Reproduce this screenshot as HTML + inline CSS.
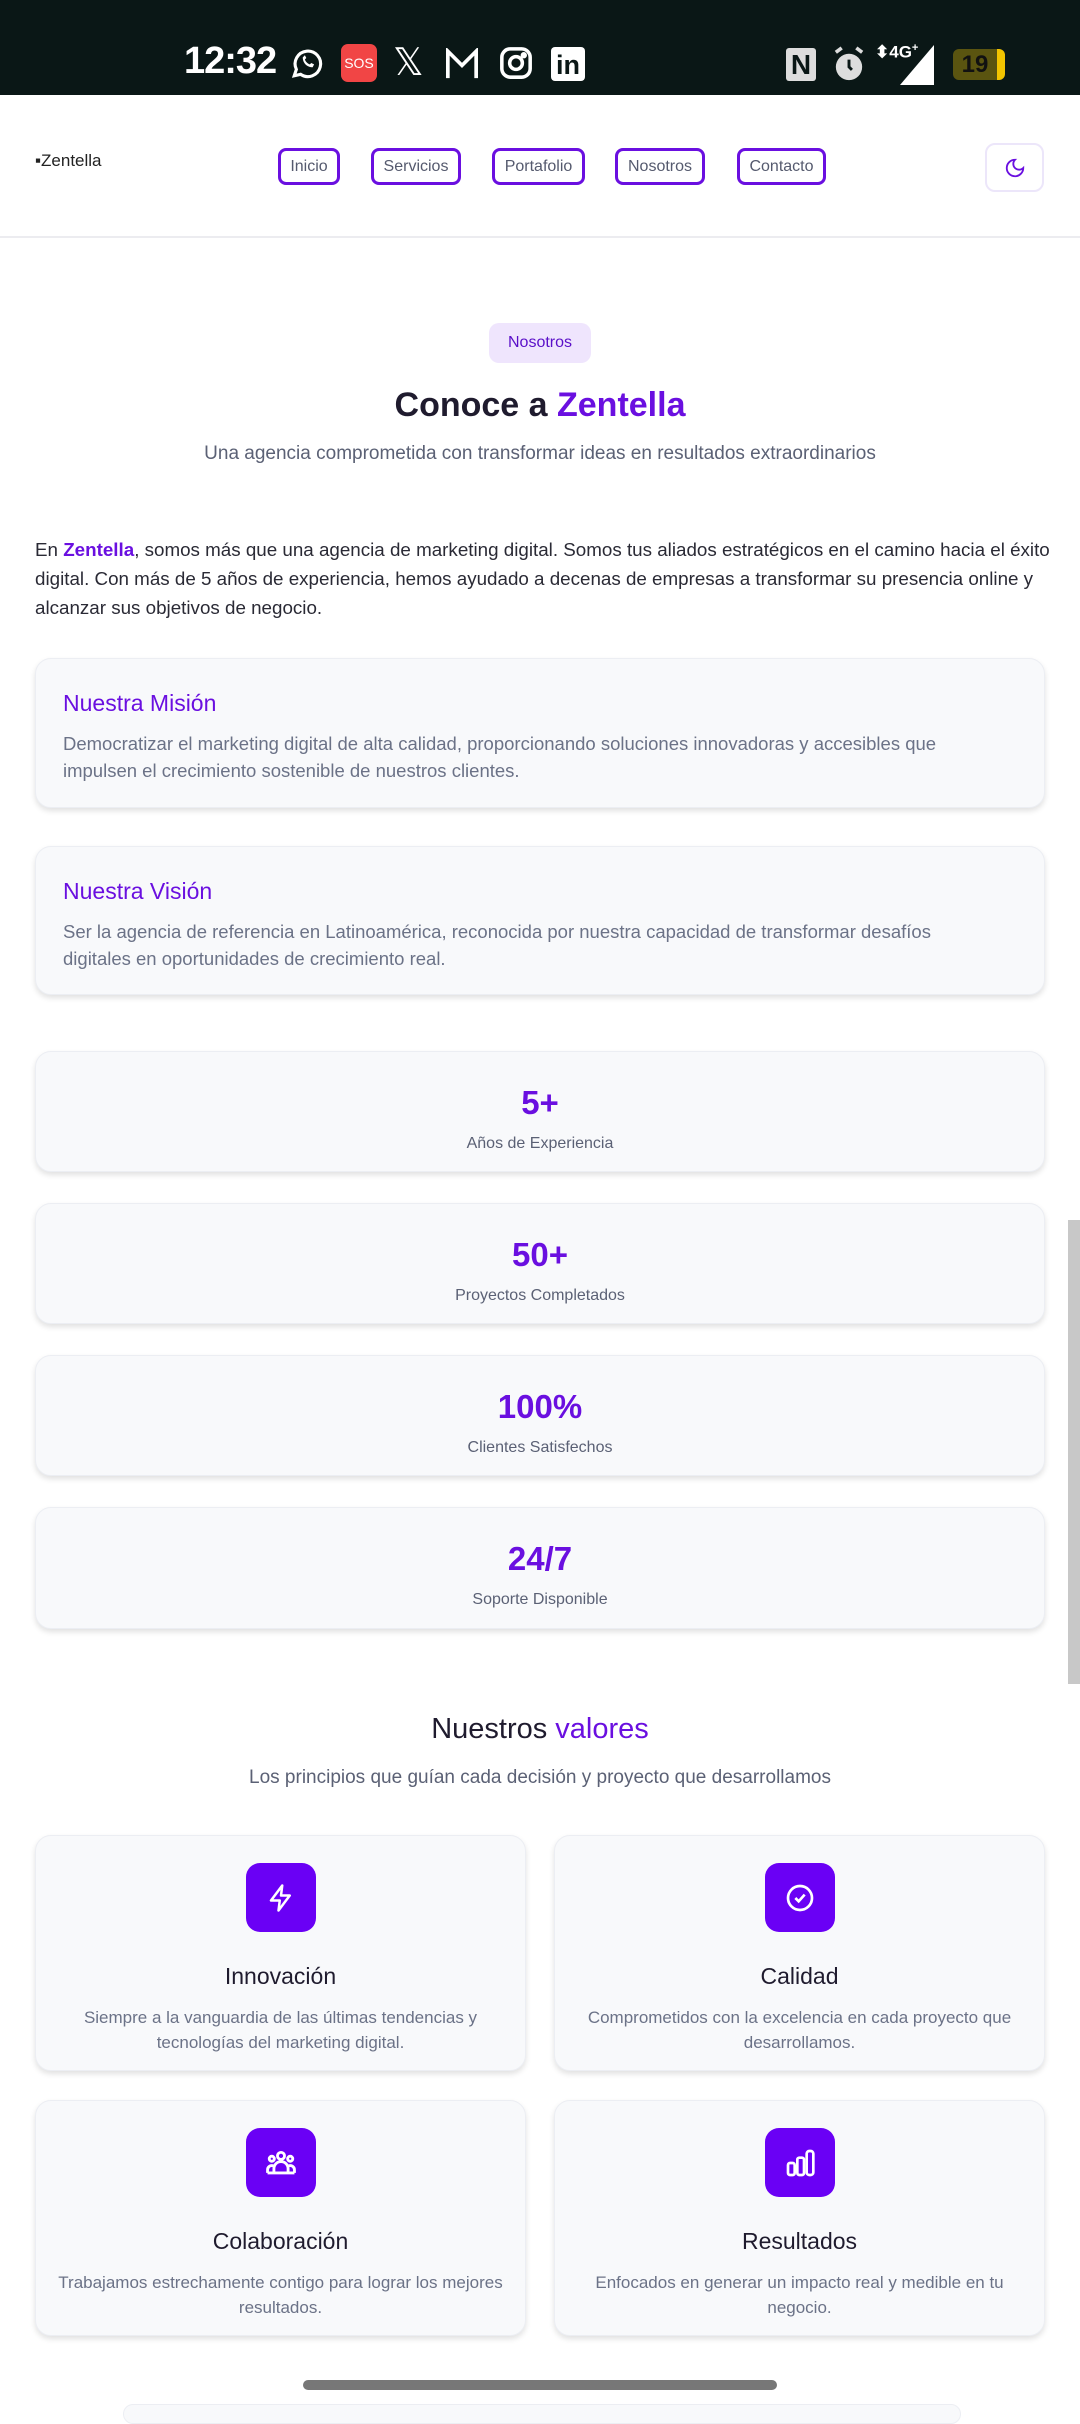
<!DOCTYPE html>
<html><head><meta charset="utf-8"><style>
*{margin:0;padding:0;box-sizing:border-box}
body{width:1080px;height:2412px;overflow:hidden;background:#fff;font-family:"Liberation Sans",sans-serif;position:relative;color:#1f1b2e}
.abs{position:absolute}
.sb{left:0;top:0;width:1080px;height:95px;background:#0a1716;color:#fff}
.nav{top:148px;height:37px;border:3px solid #6a0fe0;border-radius:8px;font-size:16px;color:#555a6e;display:flex;align-items:center;justify-content:center}
.card{left:35px;width:1010px;background:#f8f9fb;border:1px solid #eceef3;border-radius:16px;box-shadow:0 3px 6px rgba(0,0,0,.12)}
.ct{position:absolute;left:27px;font-size:23px;color:#6a0fe0}
.cp{position:absolute;left:27px;font-size:18.5px;color:#6b7287;line-height:27px;white-space:nowrap}
.stat{text-align:center}
.stat b{display:block;font-size:33px;color:#6a0fe0;margin-top:31px;line-height:40px}
.stat span{display:block;font-size:16px;color:#5b6175;margin-top:12px}
.vc{width:491px;height:236px;background:#f8f9fb;border:1px solid #eceef3;border-radius:16px;box-shadow:0 3px 6px rgba(0,0,0,.12);text-align:center}
.ic{position:absolute;left:210px;top:27px;width:70px;height:69px;background:#6a00f5;border-radius:14px;display:flex;align-items:center;justify-content:center}
.vt{position:absolute;left:0;right:0;top:127px;font-size:23px;color:#1f1b2e}
.vd{position:absolute;left:0;right:0;top:169px;font-size:17px;color:#6b7287;line-height:25px}
</style></head><body>
<div class="abs sb">
 <div class="abs" style="left:184px;top:40px;font-size:38px;font-weight:bold;letter-spacing:-1px">12:32</div>
 <svg class="abs" style="left:290px;top:46px" width="34" height="34" viewBox="0 0 24 24" fill="none" stroke="#fff" stroke-width="2.2"><path d="M3 21l1.5-4.5A9 9 0 1 1 7.5 20z"/><path d="M9 8c0 4 3 7 7 7l1-2-2-1-1 1c-1.5-.5-3-2-3.5-3.5l1-1-1-2z" fill="#fff" stroke="none"/></svg>
 <div class="abs" style="left:341px;top:44px;width:36px;height:38px;background:#f14545;border-radius:7px;font-size:14px;display:flex;align-items:center;justify-content:center">SOS</div>
 <div class="abs" style="left:393px;top:40px;font-size:38px">𝕏</div>
 <svg class="abs" style="left:445px;top:48px" width="34" height="32" viewBox="0 0 24 22" fill="none" stroke="#fff" stroke-width="2.6"><path d="M2 21V2l10 10L22 2v19"/></svg>
 <svg class="abs" style="left:499px;top:46px" width="34" height="34" viewBox="0 0 24 24" fill="none" stroke="#fff" stroke-width="2.5"><rect x="2" y="2" width="20" height="20" rx="6"/><circle cx="12" cy="12" r="4.5"/><circle cx="17.5" cy="6.5" r="1" fill="#fff"/></svg>
 <div class="abs" style="left:551px;top:47px;width:34px;height:34px;background:#fff;border-radius:4px;color:#0a1716;font-weight:bold;font-size:27px;line-height:36px;text-align:center">in</div>
 <div class="abs" style="left:786px;top:48px;width:30px;height:33px;background:#ddd;border-radius:3px;color:#0a1716;font-weight:bold;font-size:28px;line-height:33px;text-align:center">N</div>
 <svg class="abs" style="left:831px;top:45px" width="36" height="38" viewBox="0 0 24 26"><circle cx="12" cy="15" r="9" fill="#ddd"/><path d="M12 10v5l2 2" stroke="#0a1716" stroke-width="2" fill="none"/><path d="M3 5l4-3M21 5l-4-3" stroke="#ddd" stroke-width="2.5"/></svg>
 <div class="abs" style="left:875px;top:42px;font-size:17px;font-weight:bold">⬍4G<sup style="font-size:11px">+</sup></div>
 <svg class="abs" style="left:900px;top:45px" width="36" height="40"><path d="M34 0V40H0z" fill="#fff"/></svg>
 <div class="abs" style="left:953px;top:49px;width:52px;height:31px;background:#5a5410;border-radius:6px;border-right:8px solid #f2c400;color:#111;font-size:24px;line-height:31px;text-align:center;font-weight:bold">19</div>
</div>
<div class="abs" style="left:35px;top:151px;font-size:17px;color:#222">▪Zentella</div>
<div class="abs nav" style="left:278px;width:62px">Inicio</div>
<div class="abs nav" style="left:371px;width:90px">Servicios</div>
<div class="abs nav" style="left:492px;width:93px">Portafolio</div>
<div class="abs nav" style="left:615px;width:90px">Nosotros</div>
<div class="abs nav" style="left:737px;width:89px">Contacto</div>
<div class="abs" style="left:985px;top:143px;width:59px;height:49px;border:2px solid #ece6fa;border-radius:10px;display:flex;align-items:center;justify-content:center"><svg width="22" height="22" viewBox="0 0 24 24" fill="none" stroke="#6a0fe0" stroke-width="2"><path d="M12 3a6 6 0 0 0 9 9 9 9 0 1 1-9-9z"/></svg></div>
<div class="abs" style="left:0;top:236px;width:1080px;height:2px;background:#ececf0"></div>

<div class="abs" style="left:489px;top:323px;width:102px;height:40px;background:#efe5fd;border-radius:10px;color:#5a0fc8;font-size:16px;display:flex;align-items:center;justify-content:center">Nosotros</div>
<div class="abs" style="left:0;width:1080px;top:386px;text-align:center;font-size:34px;font-weight:bold;color:#1f1b2e">Conoce a <span style="color:#6a0fe0">Zentella</span></div>
<div class="abs" style="left:0;width:1080px;top:443px;text-align:center;font-size:19px;color:#5b6175">Una agencia comprometida con transformar ideas en resultados extraordinarios</div>

<div class="abs" style="left:35px;top:535px;font-size:18.8px;line-height:29px;color:#2a2a35;white-space:nowrap">En <b style="color:#6a0fe0">Zentella</b>, somos más que una agencia de marketing digital. Somos tus aliados estratégicos en el camino hacia el éxito<br>digital. Con más de 5 años de experiencia, hemos ayudado a decenas de empresas a transformar su presencia online y<br>alcanzar sus objetivos de negocio.</div>

<div class="abs card" style="top:658px;height:150px"><div class="ct" style="top:31px">Nuestra Misión</div><div class="cp" style="top:71px">Democratizar el marketing digital de alta calidad, proporcionando soluciones innovadoras y accesibles que<br>impulsen el crecimiento sostenible de nuestros clientes.</div></div>
<div class="abs card" style="top:846px;height:149px"><div class="ct" style="top:31px">Nuestra Visión</div><div class="cp" style="top:71px">Ser la agencia de referencia en Latinoamérica, reconocida por nuestra capacidad de transformar desafíos<br>digitales en oportunidades de crecimiento real.</div></div>

<div class="abs card stat" style="top:1051px;height:121px"><b>5+</b><span>Años de Experiencia</span></div>
<div class="abs card stat" style="top:1203px;height:121px"><b>50+</b><span>Proyectos Completados</span></div>
<div class="abs card stat" style="top:1355px;height:121px"><b>100%</b><span>Clientes Satisfechos</span></div>
<div class="abs card stat" style="top:1507px;height:122px"><b>24/7</b><span>Soporte Disponible</span></div>

<div class="abs" style="left:0;width:1080px;top:1713px;text-align:center;font-size:29px;color:#1f1b2e">Nuestros <span style="color:#6a0fe0">valores</span></div>
<div class="abs" style="left:0;width:1080px;top:1767px;text-align:center;font-size:19px;color:#5b6175">Los principios que guían cada decisión y proyecto que desarrollamos</div>

<div class="abs vc" style="left:35px;top:1835px"><div class="ic"><svg width="30" height="30" viewBox="0 0 24 24" fill="none" stroke="#fff" stroke-width="2" stroke-linejoin="round"><path d="M13 2L4 14h7l-1 8 9-12h-7z"/></svg></div><div class="vt">Innovación</div><div class="vd">Siempre a la vanguardia de las últimas tendencias y<br>tecnologías del marketing digital.</div></div>
<div class="abs vc" style="left:554px;top:1835px"><div class="ic"><svg width="32" height="32" viewBox="0 0 24 24" fill="none" stroke="#fff" stroke-width="2"><circle cx="12" cy="12" r="9"/><path d="M8.5 12l2.5 2.5 4.5-5"/></svg></div><div class="vt">Calidad</div><div class="vd">Comprometidos con la excelencia en cada proyecto que<br>desarrollamos.</div></div>
<div class="abs vc" style="left:35px;top:2100px"><div class="ic"><svg width="34" height="34" viewBox="0 0 24 24" fill="none" stroke="#fff" stroke-width="2"><circle cx="12" cy="7" r="2.5"/><circle cx="5.5" cy="9" r="1.8"/><circle cx="18.5" cy="9" r="1.8"/><path d="M7 19v-3a5 5 0 0 1 10 0v3zM2.5 19v-2a3 3 0 0 1 4-3M21.5 19v-2a3 3 0 0 0-4-3M2.5 19h19"/></svg></div><div class="vt">Colaboración</div><div class="vd">Trabajamos estrechamente contigo para lograr los mejores<br>resultados.</div></div>
<div class="abs vc" style="left:554px;top:2100px"><div class="ic"><svg width="32" height="32" viewBox="0 0 24 24" fill="none" stroke="#fff" stroke-width="2"><rect x="3" y="12" width="5" height="9" rx="1.5"/><rect x="10" y="8" width="5" height="13" rx="1.5"/><rect x="17" y="3" width="5" height="18" rx="2"/></svg></div><div class="vt">Resultados</div><div class="vd">Enfocados en generar un impacto real y medible en tu<br>negocio.</div></div>

<div class="abs" style="left:123px;top:2404px;width:838px;height:20px;background:#f8f9fb;border:1px solid #eceef3;border-radius:16px"></div>
<div class="abs" style="left:303px;top:2380px;width:474px;height:10px;background:#777;border-radius:5px"></div>
<div class="abs" style="left:1068px;top:1220px;width:12px;height:464px;background:#c8c8c8"></div>
</body></html>
